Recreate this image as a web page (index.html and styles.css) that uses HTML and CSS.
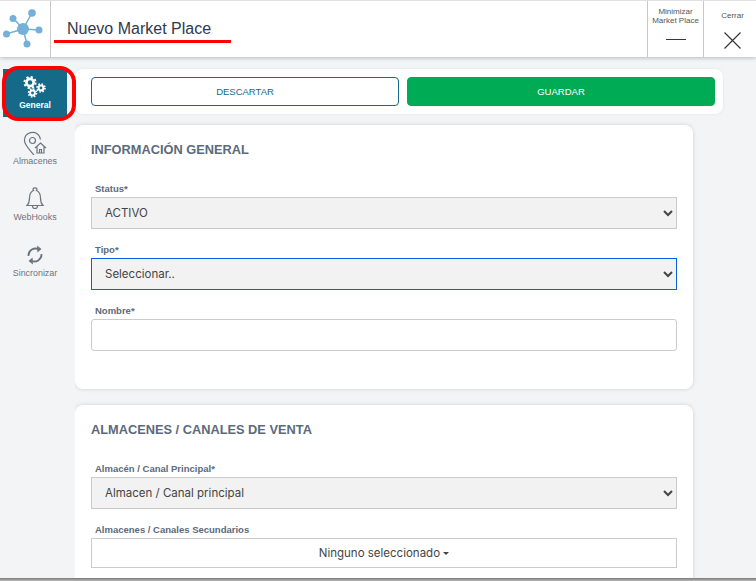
FILE: index.html
```html
<!DOCTYPE html>
<html lang="es">
<head>
  <meta charset="UTF-8">
  <meta name="viewport" content="width=device-width, initial-scale=1.0">
  <title>Nuevo Market Place</title>
  <link rel="stylesheet" href="styles.css">
</head>
<body>

  <header class="topbar">
    <div class="logo">
      <svg width="50" height="56" viewBox="0 0 50 56">
        <g stroke="#74b0d8" stroke-width="1.5">
          <line x1="23" y1="28" x2="13" y2="17"/>
          <line x1="23" y1="28" x2="32" y2="12"/>
          <line x1="23" y1="28" x2="39" y2="29"/>
          <line x1="23" y1="28" x2="6" y2="33"/>
          <line x1="23" y1="28" x2="27" y2="43"/>
        </g>
        <g fill="#74b0d8">
          <circle cx="23" cy="28" r="6"/>
          <circle cx="13" cy="17.500" r="3.500"/>
          <circle cx="32" cy="12" r="3.800"/>
          <circle cx="39" cy="29" r="3.500"/>
          <circle cx="6.500" cy="33" r="3.500"/>
          <circle cx="27" cy="43" r="3.500"/>
        </g>
      </svg>
    </div>
    <h1 class="title">Nuevo Market Place</h1>
    <button class="top-action top-action-min">
      <span>Minimizar<br>Market Place</span>
      <i class="dash"></i>
    </button>
    <button class="top-action top-action-close">
      <span>Cerrar</span>
      <svg width="17" height="17" viewBox="0 0 17 17"><path d="M0.500 0.500L16.500 16.500M16.500 0.500L0.500 16.500" stroke="#333" stroke-width="1.100" fill="none"/></svg>
    </button>
    <div class="title-mark"></div>
  </header>

  <div class="page">
    <nav class="sidebar">
      <a class="side-item active">
        <svg width="24" height="24" viewBox="0 0 24 24" fill="none" stroke="#fff">
          <circle cx="7" cy="7.500" r="3.600" stroke-width="2.600"/>
          <circle cx="7" cy="7.500" r="5.600" stroke-width="2" stroke-dasharray="2.200 2.200"/>
          <circle cx="18" cy="13" r="2.400" stroke-width="2"/>
          <circle cx="18" cy="13" r="4" stroke-width="1.600" stroke-dasharray="1.570 1.570"/>
          <circle cx="9.500" cy="18" r="2.400" stroke-width="2"/>
          <circle cx="9.500" cy="18" r="4" stroke-width="1.600" stroke-dasharray="1.570 1.570"/>
        </svg>
        <span>General</span>
      </a>
      <a class="side-item">
        <svg width="24" height="24" viewBox="0 0 24 24" fill="none" stroke="#6b7480" stroke-width="1.200">
          <path d="M11 24C6 18 1.500 14 1.500 9.500a8 8 0 0 1 15-4l1 3"/>
          <circle cx="9.500" cy="9.500" r="3"/>
          <path d="M12 17L17.500 12l5.500 5M14 15.500V22h7v-6.500M16.500 22v-3.500h2V22"/>
        </svg>
        <span>Almacenes</span>
      </a>
      <a class="side-item">
        <svg width="24" height="24" viewBox="0 0 24 24" fill="none" stroke="#6b7480" stroke-width="1.200">
          <path d="M12 1a1.500 1.500 0 0 0-1.500 2.500C7 5 6.500 8.500 6.500 11c0 3.500-1 6-2.500 7.500h16c-1.500-1.500-2.500-4-2.500-7.500 0-2.500-.5-6-4-7.500A1.500 1.500 0 0 0 12 1z"/>
          <path d="M9.500 19a2.500 2.500 0 0 0 5 0"/>
        </svg>
        <span>WebHooks</span>
      </a>
      <a class="side-item">
        <svg width="24" height="24" viewBox="0 0 24 24" fill="none" stroke="#6b7480" stroke-width="1.800">
          <path d="M5.500 13a7 7 0 0 1 10.500-6.500"/>
          <path d="M18.500 11a7 7 0 0 1-10.500 6.500"/>
          <path d="M14 2.500l4.500 3.500-4 3.500z" fill="#6b7480" stroke="none"/>
          <path d="M10 21.500L5.500 18l4-3.500z" fill="#6b7480" stroke="none"/>
        </svg>
        <span>Sincronizar</span>
      </a>
      <div class="side-mark"></div>
    </nav>

    <main class="content">
      <div class="toolbar">
        <button class="btn btn-outline">DESCARTAR</button>
        <button class="btn btn-green">GUARDAR</button>
      </div>

      <section class="card">
        <h2>INFORMACIÓN GENERAL</h2>
        <div class="field">
          <label>Status*</label>
          <select class="input"><option>ACTIVO</option></select>
        </div>
        <div class="field">
          <label>Tipo*</label>
          <select class="input focused"><option>Seleccionar..</option></select>
        </div>
        <div class="field">
          <label>Nombre*</label>
          <input class="input text-input" type="text">
        </div>
      </section>

      <section class="card">
        <h2>ALMACENES / CANALES DE VENTA</h2>
        <div class="field">
          <label>Almacén / Canal Principal*</label>
          <select class="input"><option>Almacen / Canal principal</option></select>
        </div>
        <div class="field">
          <label>Almacenes / Canales Secundarios</label>
          <button class="multi">Ninguno seleccionado <i class="caret"></i></button>
        </div>
      </section>
    </main>
  </div>

  <div class="bottom-line"></div>

</body>
</html>
```

FILE: styles.css
```css
* {
  box-sizing: border-box;
}

html, body {
  height: 100%;
}

body {
  margin: 0;
  display: flex;
  flex-direction: column;
  overflow: hidden;
  font-family: 'Liberation Sans', Arial, sans-serif;
  background-color: #f3f4f6;
  color: #2f3a4c;
}

/* barra superior */
.topbar {
  position: relative;
  flex: none;
  display: flex;
  height: 57px;
  background-color: #fff;
  border-top: 1px solid #e0e0e0;
  box-shadow: 0 1px 4px rgba(0, 0, 0, 0.25);
  z-index: 2;
}

.logo {
  flex: none;
  width: 51px;
  border-right: 1px solid #c8c8c8;
}

.logo svg {
  display: block;
}

.title {
  flex: 1;
  margin: 0;
  padding: 18px 0 0 16px;
  font-size: 16px;
  line-height: 20px;
  font-weight: normal;
  color: #2f3a4c;
}

.title-mark {
  position: absolute;
  left: 54px;
  top: 39px;
  width: 177px;
  height: 3px;
  background-color: #f00;
}

.top-action {
  flex: none;
  display: flex;
  flex-direction: column;
  align-items: center;
  padding: 0;
  border: none;
  border-left: 1px solid #c8c8c8;
  background: none;
  font-family: inherit;
  font-size: 8px;
  line-height: 9px;
  color: #555;
}

.top-action-min {
  width: 56px;
  padding-top: 6px;
}

.top-action-min .dash {
  width: 20px;
  height: 1px;
  margin-top: 14px;
  background-color: #2f3a4c;
}

.top-action-close {
  width: 53px;
  padding: 10px 0 0 5px;
}

.top-action-close svg {
  margin-top: 12px;
}

.page {
  flex: 1;
  display: flex;
  min-height: 0;
}

/* menu lateral */
.sidebar {
  position: relative;
  flex: none;
  width: 75px;
  padding: 12px 8px 0 3px;
}

.side-item {
  display: flex;
  flex-direction: column;
  align-items: center;
  height: 48px;
  margin-bottom: 8px;
  padding-top: 6px;
  font-size: 8.900px;
  line-height: 10px;
  color: #6b7480;
}

.side-item svg {
  margin-bottom: 1px;
}

.side-item.active {
  background-color: #156a8a;
  color: #fff;
  font-size: 8.500px;
  font-weight: bold;
}

.side-mark {
  position: absolute;
  left: 2px;
  top: 9px;
  width: 74px;
  height: 55px;
  border: 4px solid #f00;
  border-radius: 16px;
}

/* contenido */
.content {
  flex: 1;
  min-width: 0;
  padding-top: 12px;
  overflow: hidden;
}

.toolbar {
  display: flex;
  gap: 8px;
  width: 648px;
  height: 45px;
  padding: 8px 8px 8px 16px;
  margin-bottom: 11px;
  background-color: #fff;
  border-radius: 8px;
  box-shadow: 0 0 3px rgba(0, 0, 0, 0.08);
}

.btn {
  flex: 1;
  border-radius: 4px;
  font-family: inherit;
  font-size: 9.500px;
}

.btn-outline {
  background-color: #fff;
  border: 1px solid #156a8a;
  color: #156a8a;
}

.btn-green {
  background-color: #00ab55;
  border: 1px solid #00ab55;
  color: #fff;
}

.card {
  width: 618px;
  height: 264px;
  margin-bottom: 16px;
  padding: 17px 16px 0;
  background-color: #fff;
  border-radius: 8px;
  box-shadow: 0 0 4px rgba(0, 0, 0, 0.15);
}

.card h2 {
  margin: 0 0 25px;
  font-size: 12.800px;
  line-height: 16px;
  color: #5b6a7c;
}

.field {
  margin-bottom: 15px;
}

.field label {
  display: block;
  padding-left: 4px;
  margin-bottom: 2px;
  font-size: 9.500px;
  line-height: 12px;
  font-weight: bold;
  color: #5b6a7c;
}

.input {
  display: block;
  width: 100%;
  height: 32px;
  padding: 0 9px;
  border: 1px solid #cbcbcb;
  border-radius: 0;
  background-color: #f2f2f2;
  font-family: Inter, sans-serif;
  font-size: 11.500px;
  color: #444;
}

.input.focused {
  border-color: #0b5ed7;
}

.text-input {
  background-color: #fff;
  border-radius: 3px;
}

.multi {
  display: block;
  width: 100%;
  height: 30px;
  border: 1px solid #cbcbcb;
  background-color: #fff;
  font-family: Inter, sans-serif;
  font-size: 11.500px;
  color: #444;
}

.caret {
  display: inline-block;
  vertical-align: middle;
  border-top: 3px solid #444;
  border-left: 3px solid transparent;
  border-right: 3px solid transparent;
}

.bottom-line {
  flex: none;
  height: 3px;
  background: linear-gradient(#777, #bbb);
}
```
